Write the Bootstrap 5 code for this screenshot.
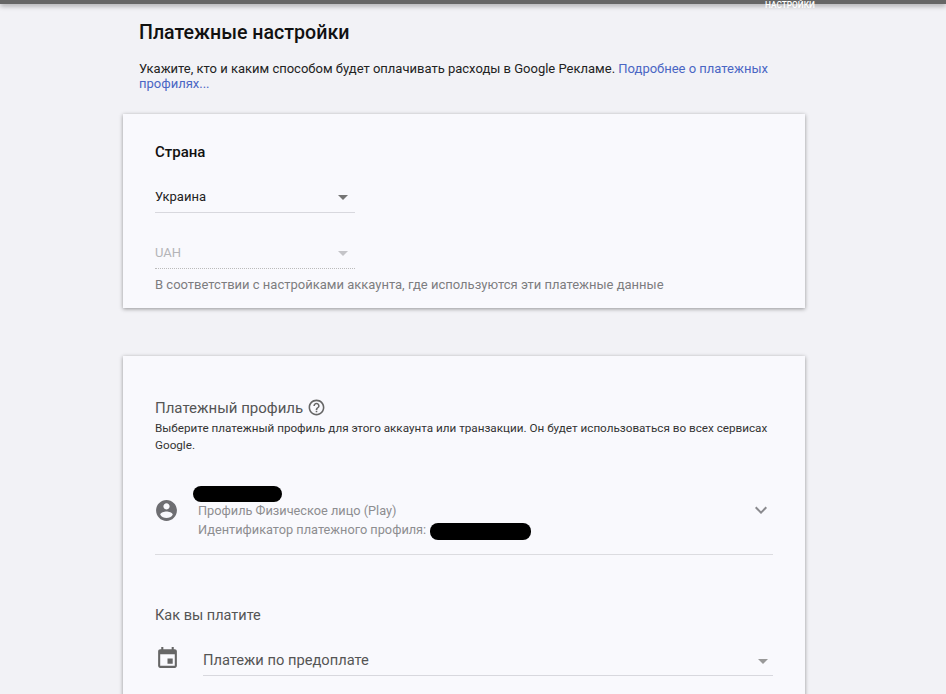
<!DOCTYPE html>
<html lang="ru">
<head>
<meta charset="utf-8">
<title>Платежные настройки</title>
<link href="https://cdn.jsdelivr.net/npm/bootstrap@5.3.0/dist/css/bootstrap.min.css" rel="stylesheet">
<style>
html,body{height:694px;overflow:hidden}
body{background:#f2f2f6;font-family:Roboto,"Liberation Sans",sans-serif;color:#222}
.topstrip{height:4px;background:#666;box-shadow:0 2px 5px rgba(0,0,0,.35);overflow:visible;padding-left:765px}
.topstrip-label{display:block;font-size:8.3px;line-height:9px;padding-top:1px;color:#fff;white-space:nowrap;font-weight:500}
.page-col{margin-left:123px;width:682px}
.page-head{padding:17px 16px 0}
.page-title{font-size:19.6px;font-weight:500;line-height:24px;margin:0 0 16px;color:#111}
.page-desc{font-size:13px;line-height:15px;margin:0;color:#222}
.page-desc a{color:#4a66c4;text-decoration:none}
.panel{background:#f9f9fd;border:0;border-radius:0;box-shadow:0 1px 4px rgba(0,0,0,.4)}
.panel-country{margin-top:23px;height:194px;padding:30px 32px 0}
.panel-profile{margin-top:48px;height:400px;padding:42px 32px 0}
.panel-h{font-size:15px;font-weight:500;line-height:17px;margin:0 0 28px;color:#111}
.sel{width:200px;height:24px;font-size:13px;line-height:16px;border-bottom:1px solid #d8d8de;color:#222}
.sel-off{margin-top:32px;color:#b4b4b8;border-bottom:1px dotted #bbb}
.tri{width:0;height:0;border-left:5px solid transparent;border-right:5px solid transparent;border-top:5px solid #757575;margin-right:7px;margin-top:6px}
.sel-off .tri{border-top-color:#c4c4c8}
.hint{font-size:13px;line-height:16px;margin:8px 0 0;color:#7d7d80}
.prof-h{font-size:15px;line-height:18px;color:#555}
.prof-d{font-size:11.7px;line-height:17px;margin:3px 0 0;color:#333}
.acct{margin-top:32px;height:69px;border-bottom:1px solid #dcdce0;width:618px}
.acct-ico{margin-top:12px;width:25px;margin-left:-1px}
.acct-body{margin-left:19px;font-size:12.75px;line-height:17.5px;color:#8d8d90}
.blot{display:block;background:#000;border-radius:8px;height:16px}
.blot-name{width:89px;margin-left:-5px}
.blot-id{width:101px;height:17px;margin-left:4px;margin-top:3px}
.acct-chev{margin-top:12px}
.pay-h{font-size:14.5px;line-height:18px;color:#555;margin:52px 0 0}
.pay-row{margin-top:21px;width:618px}
.pay-ico{width:25px;margin-top:0}
.pay-sel{margin-left:23px;flex:1;height:30px;border-bottom:1px solid #d8d8de;font-size:14.7px;line-height:26px;color:#555;padding-top:1px}
.pay-sel .tri{margin-right:5px;margin-top:12px;border-top-color:#999}
</style>
</head>
<body>
<div class="topstrip"><span class="topstrip-label">НАСТРОЙКИ</span></div>
<main class="page-col">
  <header class="page-head">
    <h1 class="page-title">Платежные настройки</h1>
    <p class="page-desc">Укажите, кто и каким способом будет оплачивать расходы в Google Рекламе. <a href="#">Подробнее о платежных профилях...</a></p>
  </header>
  <section class="card panel panel-country">
    <h2 class="panel-h">Страна</h2>
    <div class="sel d-flex justify-content-between align-items-start"><span>Украина</span><span class="tri"></span></div>
    <div class="sel sel-off d-flex justify-content-between align-items-start"><span>UAH</span><span class="tri"></span></div>
    <p class="hint">В соответствии с настройками аккаунта, где используются эти платежные данные</p>
  </section>
  <section class="card panel panel-profile">
    <div class="d-flex align-items-center gap-1 prof-h">
      <span>Платежный профиль</span>
      <svg width="19" height="19" viewBox="0 0 24 24" fill="#666" aria-hidden="true"><path d="M11 18h2v-2h-2v2zm1-16C6.48 2 2 6.48 2 12s4.48 10 10 10 10-4.48 10-10S17.52 2 12 2zm0 18c-4.41 0-8-3.59-8-8s3.59-8 8-8 8 3.59 8 8-3.59 8-8 8zm0-14c-2.21 0-4 1.79-4 4h2c0-1.1.9-2 2-2s2 .9 2 2c0 2-3 1.75-3 5h2c0-2.25 3-2.5 3-5 0-2.21-1.79-4-4-4z"/></svg>
    </div>
    <p class="prof-d">Выберите платежный профиль для этого аккаунта или транзакции. Он будет использоваться во всех сервисах Google.</p>
    <div class="acct d-flex align-items-start">
      <svg class="acct-ico" height="25" viewBox="0 0 24 24" fill="#6e6e72" aria-hidden="true"><path d="M12 2C6.48 2 2 6.48 2 12s4.48 10 10 10 10-4.48 10-10S17.52 2 12 2zm0 3c1.66 0 3 1.34 3 3s-1.34 3-3 3-3-1.34-3-3 1.34-3 3-3zm0 14.2c-2.5 0-4.71-1.28-6-3.22.03-1.99 4-3.08 6-3.08 1.99 0 5.97 1.09 6 3.08-1.29 1.94-3.5 3.22-6 3.22z"/></svg>
      <div class="acct-body flex-grow-1">
        <span class="blot blot-name"></span>
        <div>Профиль Физическое лицо (Play)</div>
        <div class="d-flex align-items-center">Идентификатор платежного профиля:<span class="blot blot-id"></span></div>
      </div>
      <svg class="acct-chev" width="24" height="24" viewBox="0 0 24 24" fill="#8a8a8e" aria-hidden="true"><path d="M7.41 8.59 12 13.17l4.59-4.58L18 10l-6 6-6-6z"/></svg>
    </div>
    <h3 class="pay-h fw-normal">Как вы платите</h3>
    <div class="pay-row d-flex align-items-start">
      <svg class="pay-ico" height="25" viewBox="0 0 24 24" fill="#666" aria-hidden="true"><path d="M17 12h-5v5h5v-5zM16 1v2H8V1H6v2H5c-1.11 0-1.99.9-1.99 2L3 19c0 1.1.89 2 2 2h14c1.1 0 2-.9 2-2V5c0-1.1-.9-2-2-2h-1V1h-2zm3 18H5V8h14v11z"/></svg>
      <div class="pay-sel d-flex justify-content-between"><span>Платежи по предоплате</span><span class="tri"></span></div>
    </div>
  </section>
</main>
<script src="https://cdn.jsdelivr.net/npm/bootstrap@5.3.0/dist/js/bootstrap.bundle.min.js"></script>
</body>
</html>
